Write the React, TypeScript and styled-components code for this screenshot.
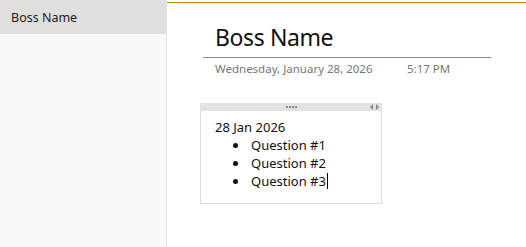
import React from "react";
import styled, { createGlobalStyle } from "styled-components";

const Global = createGlobalStyle`
  html, body { margin: 0; padding: 0; background: #ffffff; }
  body { font-family: "Noto Sans", "Open Sans", sans-serif; }
`;

const Shell = styled.div`
  display: flex;
  width: 526px;
  height: 247px;
  overflow: hidden;
`;

const Sidebar = styled.nav`
  width: 166px;
  flex: none;
  background: #f9f8f6;
  border-right: 1px solid #e6e4e2;
  display: flex;
  flex-direction: column;
`;

const PageItem = styled.div<{ $selected?: boolean }>`
  height: 34px;
  display: flex;
  align-items: center;
  padding-left: 11px;
  font-size: 12.5px;
  color: #222;
  background: ${(p) => (p.$selected ? "#e1dfdd" : "transparent")};
`;

const Main = styled.main`
  flex: 1;
  display: flex;
  flex-direction: column;
`;

const Accent = styled.div`
  margin-top: 2px;
  height: 1px;
  background: #c8890f;
`;

const Header = styled.header`
  margin-left: 36px;
  margin-top: 17px;
  width: 288px;
`;

const Title = styled.h1`
  margin: 0;
  padding-left: 12px;
  font-weight: 400;
  font-size: 23px;
  letter-spacing: -0.4px;
  line-height: 34px;
  height: 38px;
  color: #111;
  border-bottom: 1px solid #8c8c8c;
  box-sizing: border-box;
`;

const Meta = styled.div`
  display: flex;
  padding-left: 12px;
  margin-top: 3px;
  font-size: 11.5px;
  line-height: 15px;
  color: #767676;
`;

const MetaDate = styled.span`
  width: 192px;
`;

const Note = styled.section`
  margin-left: 33px;
  margin-top: 27px;
  width: 180px;
  height: 100px;
  border: 1px solid #dadada;
  border-top: none;
  display: flex;
  flex-direction: column;
`;

const NoteBar = styled.div`
  position: relative;
  height: 8px;
  margin: 0 -1px;
  background: #e2e2e2;
  display: flex;
  align-items: center;
  justify-content: center;
`;

const Dots = styled.div`
  display: flex;
  gap: 1px;
`;

const Dot = styled.span`
  width: 2px;
  height: 2px;
  background: #8a8a8a;
`;

const Arrows = styled.svg`
  position: absolute;
  right: 3px;
  top: 1px;
`;

const NoteBody = styled.div`
  padding: 7px 0 0 14px;
  font-size: 13px;
  line-height: 18px;
  color: #111;
`;

const List = styled.ul`
  margin: 0;
  padding-left: 18px;
  list-style: none;
`;

const Item = styled.li`
  display: flex;
  align-items: center;
`;

const Bullet = styled.span`
  flex: none;
  width: 18px;
  display: flex;
  align-items: center;
  &::before {
    content: "";
    width: 5px;
    height: 5px;
    border-radius: 50%;
    background: #111;
    margin-top: 1px;
  }
`;

const Caret = styled.span`
  display: inline-block;
  width: 1px;
  height: 16px;
  background: #000;
  margin-left: 1px;
`;

export default function App() {
  return (
    <>
      <Global />
      <Shell>
        <Sidebar>
          <PageItem $selected>Boss Name</PageItem>
        </Sidebar>
        <Main>
          <Accent />
          <Header>
            <Title>Boss Name</Title>
            <Meta>
              <MetaDate>Wednesday, January 28, 2026</MetaDate>
              <span>5:17 PM</span>
            </Meta>
          </Header>
          <Note>
            <NoteBar>
              <Dots>
                <Dot />
                <Dot />
                <Dot />
                <Dot />
              </Dots>
              <Arrows width="9" height="6" viewBox="0 0 9 6">
                <path d="M3 0 L0 3 L3 6 Z" fill="#888" />
                <path d="M6 0 L9 3 L6 6 Z" fill="#888" />
              </Arrows>
            </NoteBar>
            <NoteBody>
              <div>28 Jan 2026</div>
              <List>
                <Item>
                  <Bullet />
                  Question #1
                </Item>
                <Item>
                  <Bullet />
                  Question #2
                </Item>
                <Item>
                  <Bullet />
                  Question #3
                  <Caret />
                </Item>
              </List>
            </NoteBody>
          </Note>
        </Main>
      </Shell>
    </>
  );
}
